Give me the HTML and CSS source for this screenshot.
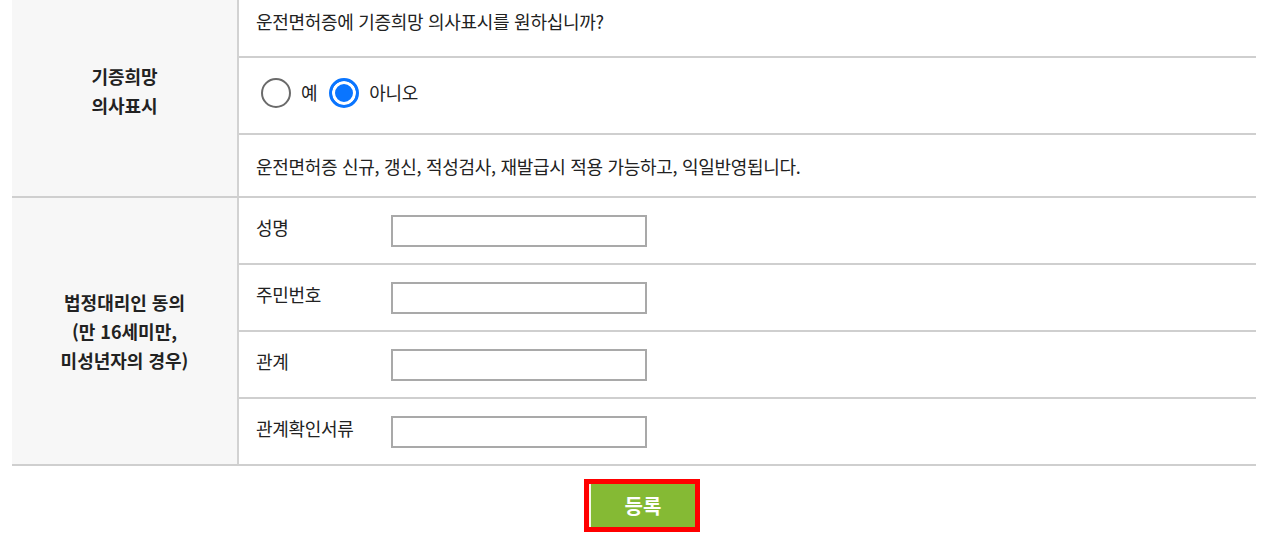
FILE: index.html
```html
<!DOCTYPE html>
<html lang="ko">
<head>
<meta charset="utf-8">
<title>기증희망 의사표시</title>
<link rel="stylesheet" href="styles.css">
</head>
<body>
<div class="page">
  <table class="form-table">
    <tr class="r-q">
      <th rowspan="3">기증희망<br>의사표시</th>
      <td class="cell">운전면허증에 기증희망 의사표시를 원하십니까?</td>
    </tr>
    <tr class="r-radio">
      <td class="cell">
        <div class="radios">
          <label class="opt"><input type="radio" name="donate" value="Y"><span>예</span></label>
          <label class="opt"><input type="radio" name="donate" value="N" checked><span>아니오</span></label>
        </div>
      </td>
    </tr>
    <tr class="r-note">
      <td class="cell">운전면허증 신규, 갱신, 적성검사, 재발급시 적용 가능하고, 익일반영됩니다.</td>
    </tr>
    <tr class="r-field">
      <th rowspan="4">법정대리인 동의<br>(만 16세미만,<br>미성년자의 경우)</th>
      <td class="cell"><div class="field"><span class="lbl">성명</span><input type="text" class="txt"></div></td>
    </tr>
    <tr class="r-field">
      <td class="cell"><div class="field"><span class="lbl">주민번호</span><input type="text" class="txt"></div></td>
    </tr>
    <tr class="r-field">
      <td class="cell"><div class="field"><span class="lbl">관계</span><input type="text" class="txt"></div></td>
    </tr>
    <tr class="r-field">
      <td class="cell"><div class="field"><span class="lbl">관계확인서류</span><input type="text" class="txt"></div></td>
    </tr>
  </table>
  <div class="actions">
    <div class="btn-frame"><button type="button" class="btn-submit">등록</button></div>
  </div>
</div>
</body>
</html>
```
FILE: styles.css
```css
html, body {
  margin: 0;
  padding: 0;
  background: #fff;
}
body {
  font-family: "Noto Sans CJK KR", "Noto Sans", "Liberation Sans", sans-serif;
  color: #222;
  font-size: 18px;
}
.page {
  padding: 0 24px 0 12px;
  margin-top: -14px;
}
.form-table {
  width: 1244px;
  border-collapse: collapse;
}
.form-table th {
  width: 225px;
  background: #f7f7f7;
  border-right: 2px solid #d2d2d2;
  border-bottom: 2px solid #cfcfcf;
  font-weight: bold;
  font-size: 18px;
  line-height: 29px;
  text-align: center;
  vertical-align: middle;
  padding: 0;
  color: #222;
}
.form-table td.cell {
  border-bottom: 2px solid #cfcfcf;
  padding: 0 0 0 17px;
  line-height: 24px;
  vertical-align: middle;
  letter-spacing: -0.3px;
}
.r-q td.cell { height: 70px; }
.r-radio td.cell { height: 75px; }
.r-note td.cell { height: 61px; }
.r-field td.cell { height: 65px; }

.radios {
  display: flex;
  align-items: center;
  padding-left: 5px;
  margin-top: -6px;
}
.opt {
  display: flex;
  align-items: center;
  margin-right: 12px;
}
.opt input {
  appearance: none;
  -webkit-appearance: none;
  width: 30px;
  height: 30px;
  margin: 0 10px 0 0;
  border: 2px solid #6a6a6a;
  border-radius: 50%;
  background: #fff;
  box-sizing: border-box;
}
.opt input:checked {
  border: 3px solid #0a75ff;
  background: #0a75ff;
  box-shadow: inset 0 0 0 3px #fff;
}
.opt span {
  font-size: 18px;
  line-height: 24px;
  margin-top: -2px;
}

.field {
  display: flex;
  align-items: center;
}
.lbl {
  width: 135px;
  flex: none;
  margin-top: -7px;
}
.txt {
  width: 256px;
  height: 32px;
  box-sizing: border-box;
  border: 2px solid #a9a9a9;
  margin: 0;
  padding: 0 6px;
  background: #fff;
}

.actions {
  display: flex;
  justify-content: center;
  margin-top: 13px;
  padding-left: 16px;
}
.btn-frame {
  border: 5px solid #ff0000;
  background: #fff;
  display: flex;
}
.btn-submit {
  width: 106px;
  height: 43px;
  border: 0;
  border-left: 2px solid #f4f8ea;
  background: #85ba34;
  color: #fff;
  font-family: "Noto Sans CJK KR", "Noto Sans", sans-serif;
  font-weight: bold;
  font-size: 20px;
  padding: 0;
  cursor: pointer;
}
```
